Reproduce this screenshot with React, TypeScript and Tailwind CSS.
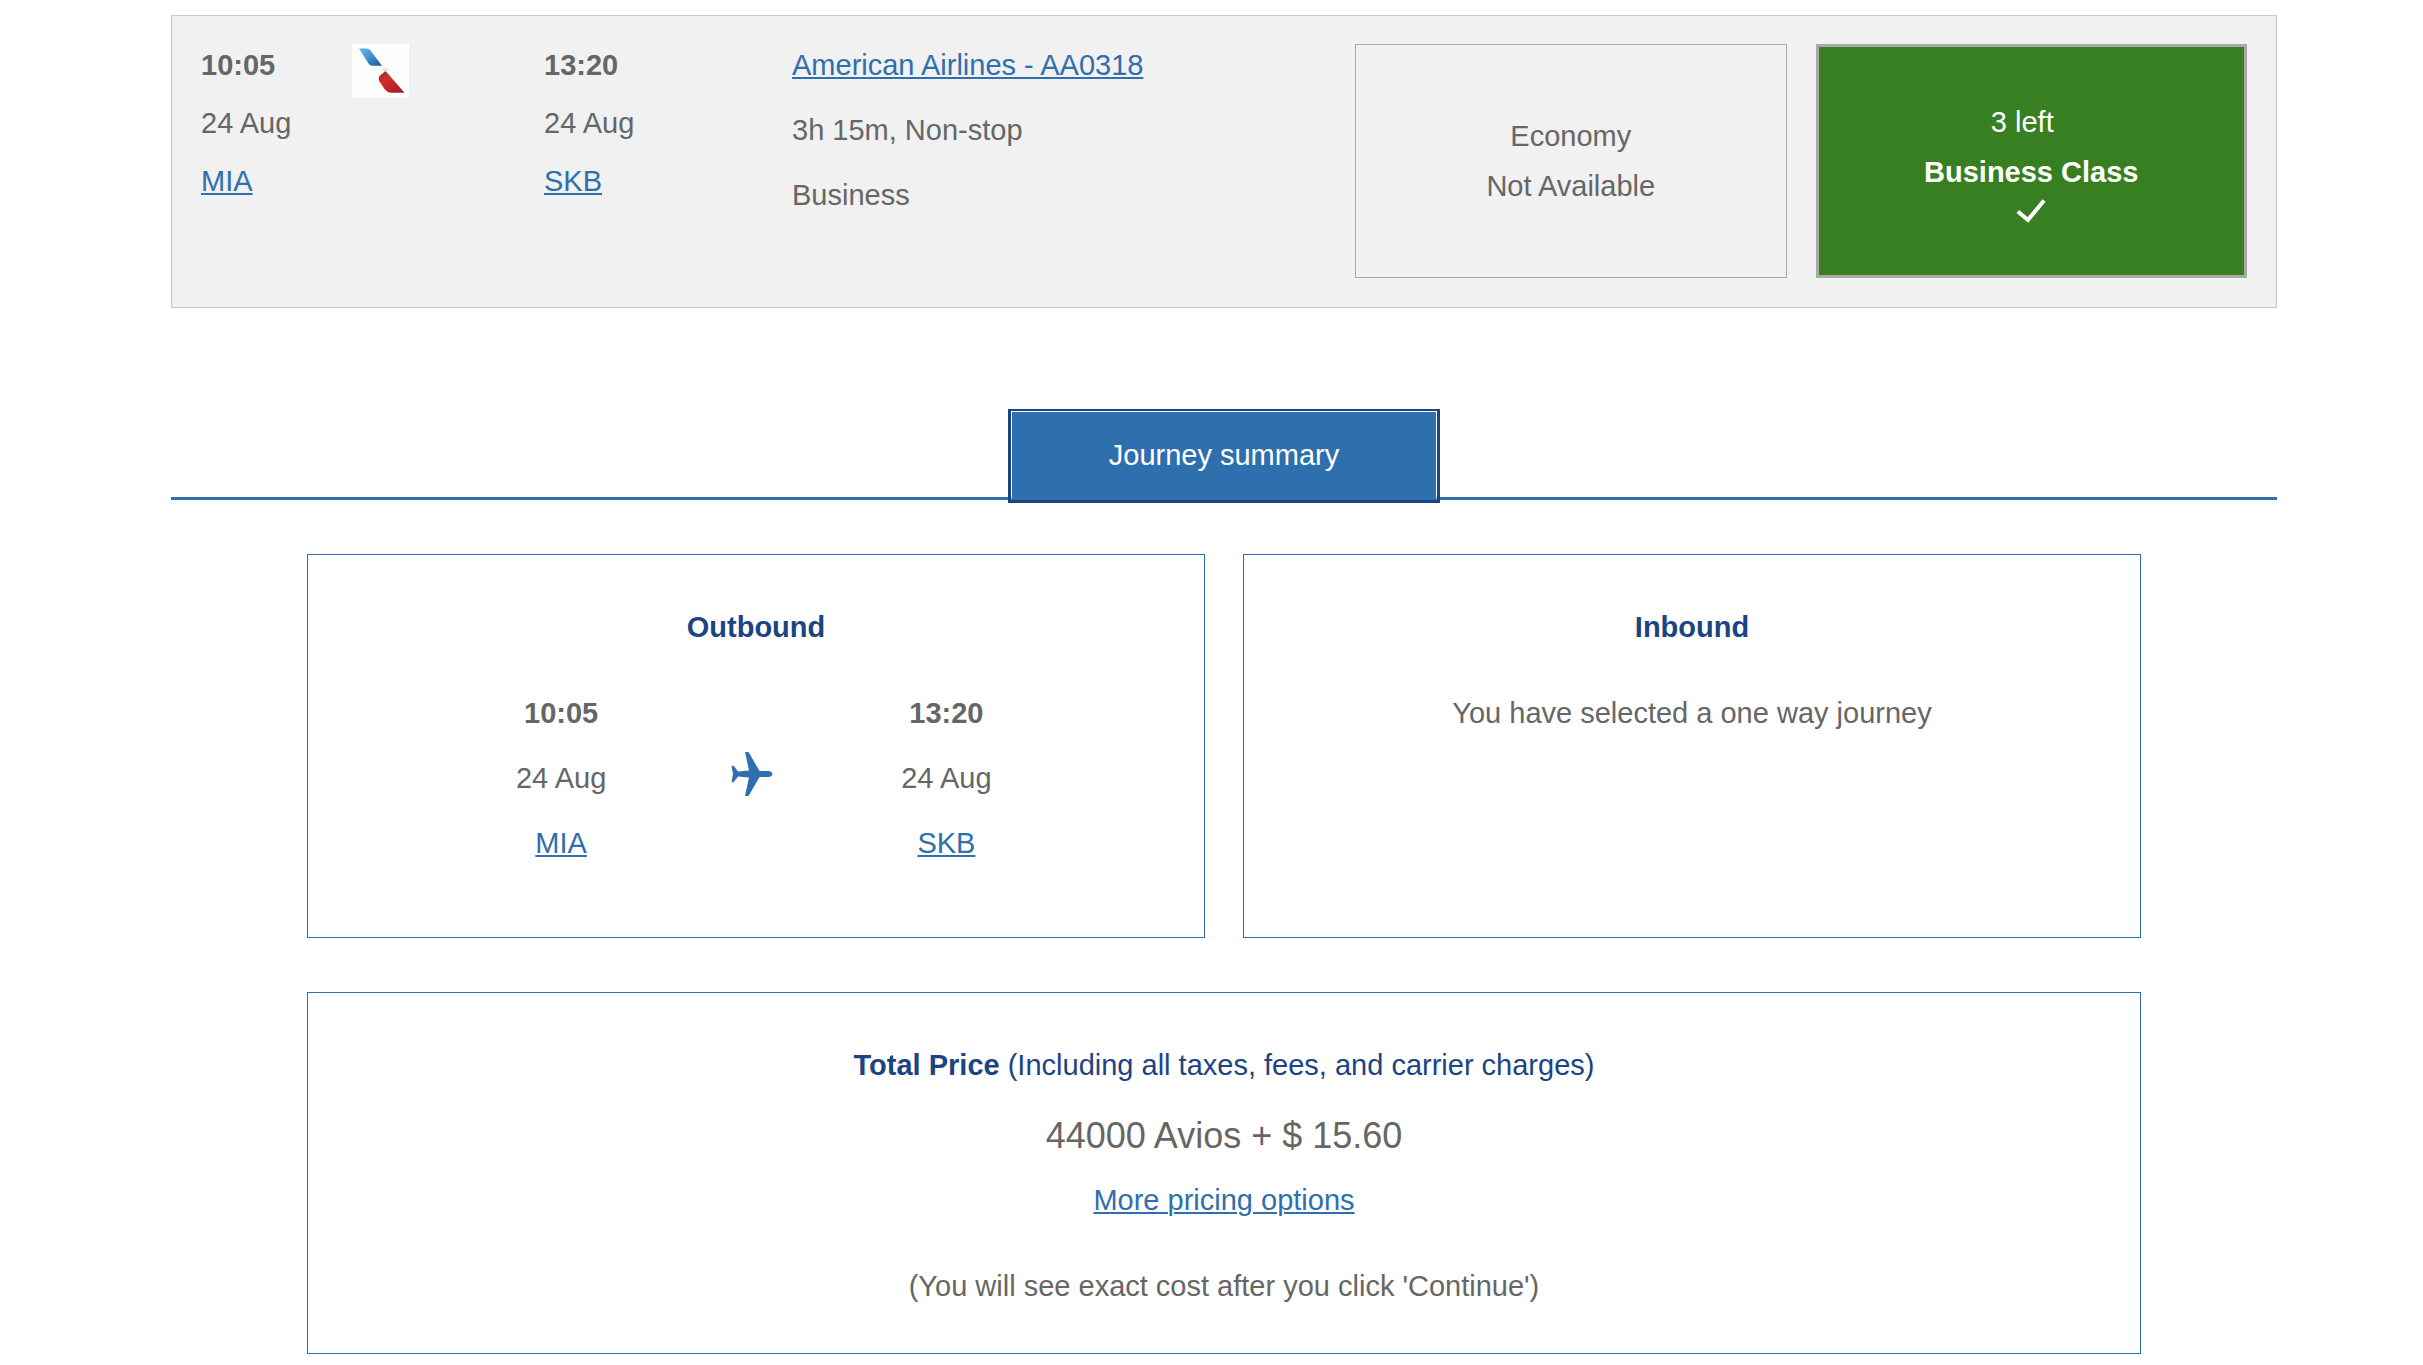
import clsx from "clsx";

interface Stop {
  time: string;
  date: string;
  code: string;
}

const departure: Stop = { time: "10:05", date: "24 Aug", code: "MIA" };
const arrival: Stop = { time: "13:20", date: "24 Aug", code: "SKB" };

const linkClass =
  "text-[#2f6fae] underline decoration-2 underline-offset-2 hover:text-[#1b4482]";

function AirlineLogo() {
  return (
    <svg width="57" height="54" viewBox="0 0 57 54" role="img" aria-label="American Airlines">
      <defs>
        <linearGradient id="tailBlue" x1="0" y1="0" x2="1" y2="1">
          <stop offset="0" stopColor="#5fbce4" />
          <stop offset="0.5" stopColor="#3f8fcc" />
          <stop offset="1" stopColor="#1f5793" />
        </linearGradient>
        <linearGradient id="tailRed" x1="0" y1="0" x2="0.8" y2="1">
          <stop offset="0" stopColor="#8d2b2d" />
          <stop offset="0.4" stopColor="#d22d30" />
          <stop offset="1" stopColor="#a51e22" />
        </linearGradient>
      </defs>
      <rect width="57" height="54" fill="#fefefe" />
      <path d="M7 4.500H14.500Q17 4.700 18.500 6.500L30 21.800H19.500Q17.800 21.500 16.500 19.500Z" fill="url(#tailBlue)" />
      <path d="M29 26L33 24L39 26L33.500 27Z" fill="#e3e3e5" />
      <path d="M33.500 27L52.500 48.700H38.500Q35 48.200 32.500 45L27.500 37.500Q26 34.500 27.500 32Z" fill="url(#tailRed)" />
    </svg>
  );
}

function PlaneIcon() {
  return (
    <svg width="42" height="44" viewBox="0 0 42 44" fill="#2f6fae" aria-hidden="true">
      <path d="M14 0H17Q17.600 0 18 .8L28.500 19H37C40 19.200 41.500 20.600 41.500 22C41.500 23.400 40 24.800 37 25H28.500L18 43.200Q17.600 44 17 44H14L18 25.500L7 24.500L3 29.800Q2.700 30.300 2 30.300H.5L2 22L.5 13.700H2Q2.700 13.700 3 14.200L7 19.500L18 18.500Z" />
    </svg>
  );
}

function CheckIcon() {
  return (
    <svg width="30" height="24" viewBox="0 0 30 24" fill="none" aria-hidden="true">
      <path d="M1.800 12.500L12 21L28 1.500" stroke="currentColor" strokeWidth="4" />
    </svg>
  );
}

function StopDetails({ stop, spacing }: { stop: Stop; spacing: string }) {
  return (
    <div className={clsx("flex flex-col", spacing)}>
      <p className="font-bold">{stop.time}</p>
      <p>{stop.date}</p>
      <p>
        <a href="#" className={linkClass}>
          {stop.code}
        </a>
      </p>
    </div>
  );
}

function FlightCard() {
  return (
    <section className="grid grid-cols-[151fr_192fr_248fr_563fr_892fr] border border-[#c9c9c9] bg-[#f1f1f1] px-[29px] pt-7 pb-[29px]">
      <StopDetails stop={departure} spacing="gap-4" />

      <div>
        <AirlineLogo />
      </div>

      <StopDetails stop={arrival} spacing="gap-4" />

      <div className="flex flex-col gap-[23px]">
        <p>
          <a href="#" className={linkClass}>
            American Airlines - AA0318
          </a>
        </p>
        <p>3h 15m, Non-stop</p>
        <p>Business</p>
      </div>

      {/* Cabins */}
      <div className="grid min-h-[234px] grid-cols-2 gap-[29px] text-center leading-[50px]">
        <div className="flex flex-col justify-center border border-[#a9a9a9]">
          <p>Economy</p>
          <p>Not Available</p>
        </div>

        <button
          type="button"
          aria-pressed="true"
          className="flex flex-col items-center justify-center border-3 border-[#a9a9a9] bg-[#387f22] text-white"
        >
          <span className="pr-[18px]">3 left</span>
          <span className="font-bold">Business Class</span>
          <span className="py-0.5">
            <CheckIcon />
          </span>
        </button>
      </div>
    </section>
  );
}

function SummaryTab() {
  return (
    <div className="mt-[101px] flex justify-center border-b-3 border-[#2f6fae]">
      <div className="-mb-[6px] w-[432px] border-x-3 border-t-2 border-b-3 border-[#1b4482]">
        <button
          type="button"
          className="block w-full border-x border-t border-b-3 border-x-white border-t-white border-b-[#2f6fae] bg-[#2f6fae] pt-[22px] pb-[21px] text-white"
        >
          Journey summary
        </button>
      </div>
    </div>
  );
}

export default function App() {
  return (
    <main className="bg-white pt-[15px] pr-[146px] pb-[11px] pl-[171px] font-['Liberation_Sans',Arial,sans-serif] text-[29px] leading-[42px] text-[#666666]">
      <FlightCard />
      <SummaryTab />

      <div className="mx-[136px] mt-[54px] text-center">
        <div className="grid grid-cols-2 gap-[38px]">
          {/* Outbound */}
          <section className="border border-[#2f6fae] pt-[51px] pb-[73px]">
            <h2 className="font-bold text-[#1b4482]">Outbound</h2>
            <div className="mt-11 mr-[18%] ml-[17.5%] grid grid-cols-3 items-center">
              <StopDetails stop={departure} spacing="gap-[23px]" />
              <div className="flex justify-center pr-1 pb-2">
                <PlaneIcon />
              </div>
              <StopDetails stop={arrival} spacing="gap-[23px]" />
            </div>
          </section>

          {/* Inbound */}
          <section className="border border-[#2f6fae] pt-[51px] pb-[73px]">
            <h2 className="font-bold text-[#1b4482]">Inbound</h2>
            <p className="mt-11">You have selected a one way journey</p>
          </section>
        </div>

        {/* Price */}
        <section className="mt-[54px] border border-[#2f6fae] pt-[51px] pb-[46px]">
          <h2 className="text-[#1b4482]">
            <strong>Total Price</strong> (Including all taxes, fees, and carrier charges)
          </h2>
          <p className="mt-6 text-[36px] leading-[52px]">44000 Avios + $ 15.60</p>
          <p className="mt-[17px]">
            <a href="#" className={linkClass}>
              More pricing options
            </a>
          </p>
          <p className="mt-11">(You will see exact cost after you click 'Continue')</p>
        </section>
      </div>
    </main>
  );
}
